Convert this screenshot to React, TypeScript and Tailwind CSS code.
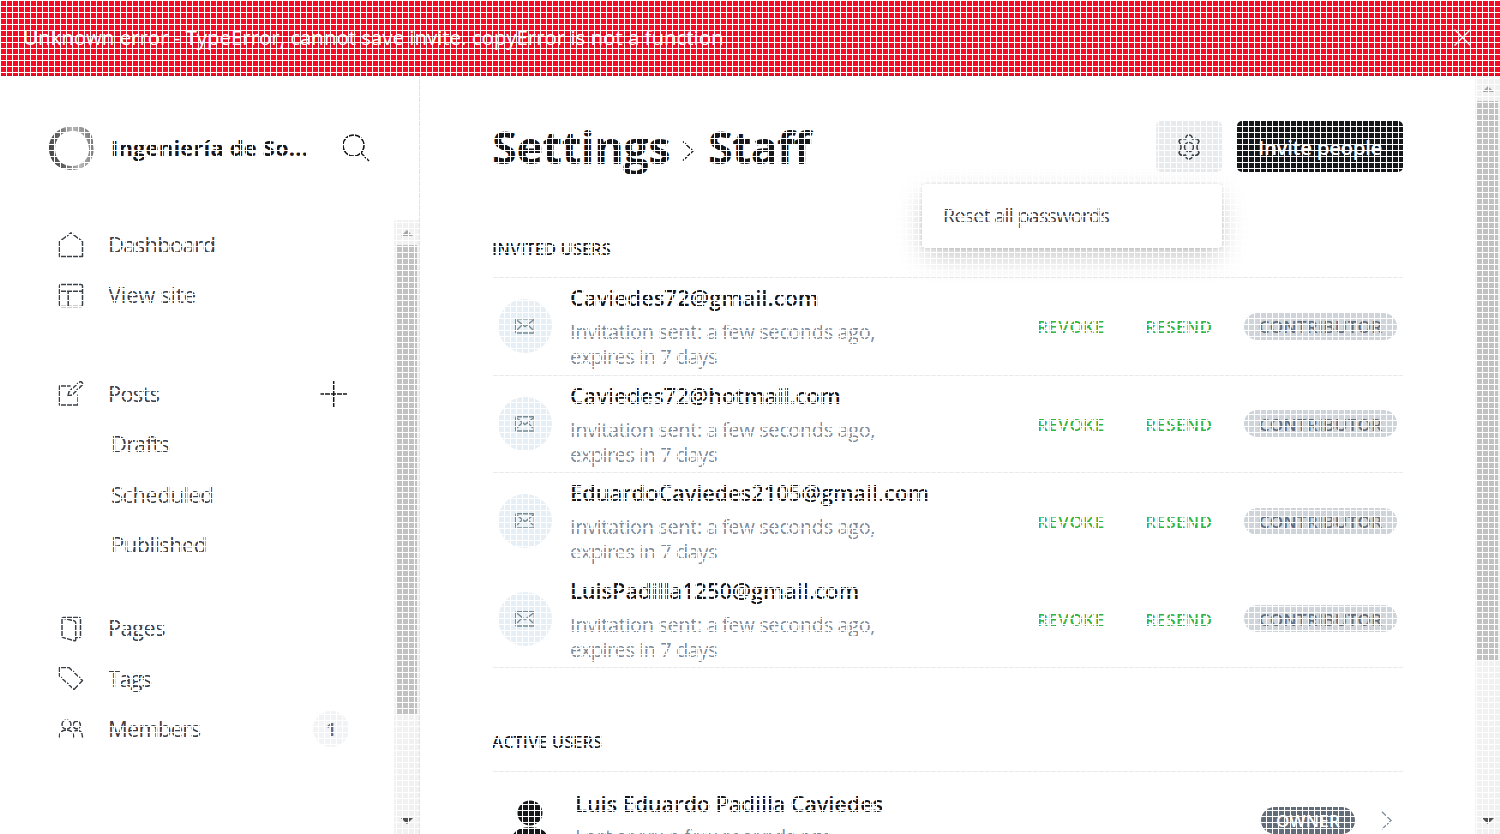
import React from "react";

const FONT = "font-['Open_Sans','Noto_Sans',sans-serif]";

function NavIcon({ name }: { name: string }) {
  return (
    <svg width="26" height="26" viewBox="0 0 26 26" fill="none" stroke="#394047" strokeWidth="1.5" strokeLinejoin="round" strokeLinecap="round" className="shrink-0">
      {name === "home" && <path d="M1.5 24.5V9.5L13 .8l11.5 8.7v15z" />}
      {name === "site" && <path d="M3 1.500h20q1.500 0 1.500 1.500v19q0 1.500-1.500 1.500H3q-1.500 0-1.500-1.500V3Q1.500 1.500 3 1.500zM1.500 8.300h23M10.200 8.300v15" />}
      {name === "posts" && <path d="M12 5H1.500v19h18.500V14M10 15l1-4.500L21.500 1q1.500-.7 2.500.4t.3 2.500L14 14z" />}
      {name === "pages" && <path d="M6 21.500H5.500Q4 21.500 4 20V3q0-1.500 1.500-1.500h15.500Q22.500 1.500 22.500 3v17q0 1.500-1.500 1.500H18M5 2.200l11 2.600q1.700.4 1.700 2V24q0 1-1.200.7L5.200 21.600" />}
      {name === "tags" && <path d="M1.500 1.500h9.500L24.500 14.500 16 23.500 1.500 10z" />}
      {name === "members" && (
        <path d="M4 8.500a4.500 4.500 0 1 0 9 0a4.500 4.500 0 1 0-9 0M15 9a3.700 3.700 0 1 0 7.400 0a3.700 3.700 0 1 0-7.400 0M1.500 21q0-7 7-7t7 7M17 14.800q7.500-1.500 7.500 6.200" />
      )}
    </svg>
  );
}

function NavItem({ icon, label, tracking, children }: { icon: string; label: string; tracking: string; children?: React.ReactNode }) {
  return (
    <div className="flex h-[50.400px] items-center pl-[58px] pr-[45px]">
      <NavIcon name={icon} />
      <span className={`mt-[-1.400px] ml-6 whitespace-nowrap text-[22px] font-normal ${tracking}`}>{label}</span>
      <span className="ml-auto flex">{children}</span>
    </div>
  );
}

function SubItem({ label, tracking }: { label: string; tracking: string }) {
  return <div className={`flex h-[50.400px] items-center pb-[2px] pl-[111px] text-[22px] ${tracking}`}>{label}</div>;
}

function Arrow({ down }: { down?: boolean }) {
  return (
    <svg width="12" height="6" viewBox="0 0 12 6" className="shrink-0">
      {down ? <path d="M0 0h12L6 6z" fill="#505050" /> : <path d="M0 6h12L6 0z" fill="#a3a3a3" />}
    </svg>
  );
}

function Chevron({ className }: { className: string }) {
  return (
    <svg viewBox="0 0 12 21" fill="none" stroke="currentColor" strokeWidth="1.4" className={className}>
      <path d="M1 1l10 9.500L1 20" />
    </svg>
  );
}

function Sidebar() {
  return (
    <aside className="flex w-[420px] shrink-0 flex-col border-r border-[#dfe3e7] text-[#394047]">
      <div className="flex h-36 shrink-0 items-center pl-[49px]">
        <svg width="46" height="46" viewBox="0 0 46 46" className="shrink-0">
          <defs>
            <linearGradient id="ring" x1="0" y1="0.600" x2="1" y2="0.400">
              <stop offset="0" stopColor="#444" />
              <stop offset=".3" stopColor="#666" />
              <stop offset=".6" stopColor="#bbb" />
              <stop offset="1" stopColor="#777" />
            </linearGradient>
          </defs>
          <path fillRule="evenodd" fill="url(#ring)" d="M25 1C38 1 45 8 44 20c3 14-7 25-21 25S0 36 0 23 11 1 25 1zM22 6C12 7 6 14 6 24s7 17 17 17 18-8 17-18S33 5 22 6z" />
        </svg>
        <span className="mt-[-1px] ml-4 w-[200px] whitespace-nowrap text-[22px] font-bold tracking-[0.150px] text-[#15171a]">Ingeniería de So...</span>
        <svg width="28" height="28" viewBox="0 0 28 28" fill="none" stroke="#15171a" strokeWidth="1.500" className="ml-[31px]">
          <circle cx="11.500" cy="11.500" r="10.500" />
          <path d="M19 19l8 8" />
        </svg>
      </div>
      <div className="flex min-h-0 flex-1">
        <nav className="w-[394px]">
          <NavItem icon="home" label="Dashboard" tracking="tracking-[-0.700px]" />
          <NavItem icon="site" label="View site" tracking="tracking-[-0.250px]" />
          <div className="h-[48.500px]" />
          <NavItem icon="posts" label="Posts" tracking="tracking-[-0.800px]">
            <svg width="28" height="28" viewBox="0 0 28 28" stroke="#15171a" strokeWidth="1.500" className="mt-[-1px] mr-[1px]">
              <path d="M13.700 1v26M.5 14h26.500" />
            </svg>
          </NavItem>
          <SubItem label="Drafts" tracking="tracking-[-0.800px]" />
          <SubItem label="Scheduled" tracking="tracking-[-0.500px]" />
          <SubItem label="Published" tracking="tracking-[-0.600px]" />
          <div className="h-[32.500px]" />
          <NavItem icon="pages" label="Pages" tracking="tracking-[-0.700px]" />
          <NavItem icon="tags" label="Tags" tracking="tracking-[-0.900px]" />
          <NavItem icon="members" label="Members" tracking="tracking-[-0.800px]">
            <span className="flex size-9 items-center justify-center rounded-full bg-[#f1f3f5] text-[18px] font-bold text-[#626d79]">1</span>
          </NavItem>
        </nav>
        <div className="flex w-[25px] flex-col items-center bg-[#f1f1f1]">
          <div className="flex h-[25px] items-center"><Arrow /></div>
          <div className="h-[469px] w-[21px] bg-[#c1c1c1]" />
          <div className="mt-auto mb-[10px]"><Arrow down /></div>
        </div>
      </div>
    </aside>
  );
}

function InviteRow({ email, tracking, last }: { email: string; tracking: string; last: boolean }) {
  return (
    <div className={`flex h-[97.500px] items-center border-t pr-[6px] pl-[6px] ${last ? "border-transparent" : "border-[#e8ebed]"}`}>
      <div className="flex size-[54px] shrink-0 items-center justify-center rounded-full bg-[#e5eff5]">
        <svg width="20" height="16" viewBox="0 0 20 16" fill="none" stroke="#738a94" strokeWidth="1.400">
          <rect x=".7" y=".7" width="18.600" height="14.300" rx="1" />
          <path d="M1 1.500l9 7 9-7M2 12l5-5M18 12l-5-5" />
        </svg>
      </div>
      <div className="ml-[18px] w-[400px] pb-[5px] whitespace-nowrap">
        <div className={`h-[37px] text-[22px] leading-[35px] font-semibold text-[#15171a] ${tracking}`}>{email}</div>
        <div className="h-[25px] text-[20px] leading-[29px] tracking-[-0.400px] text-[#7c8b9a]">Invitation sent: a few seconds ago,</div>
        <div className="h-[25px] text-[20px] leading-[29px] tracking-[-0.480px] text-[#7c8b9a]">expires in 7 days</div>
      </div>
      <span className="ml-[67px] w-[108px] pt-px text-[17px] font-semibold tracking-[0.500px] text-[#30b63e]">REVOKE</span>
      <span className="w-[99px] pt-px text-[17px] font-semibold tracking-[0.400px] text-[#30b63e]">RESEND</span>
      <span className="flex h-[27px] w-[153px] shrink-0 items-center justify-center rounded-full bg-[#ced4d9] pt-px text-[17px] font-semibold tracking-[0.250px] text-[#626d79]">CONTRIBUTOR</span>
    </div>
  );
}

const INVITES = [
  { email: "Caviedes72@gmail.com", tracking: "tracking-[0px]" },
  { email: "Caviedes72@hotmail.com", tracking: "tracking-[-0.100px]" },
  { email: "EduardoCaviedes2105@gmail.com", tracking: "tracking-[-0.150px]" },
  { email: "LuisPadilla1250@gmail.com", tracking: "tracking-[-0.180px]" },
];

function Content() {
  return (
    <main className="flex min-w-0 flex-1 flex-col overflow-hidden pr-[72px] pl-[72px]">
      <header className="relative flex h-36 shrink-0 items-center">
        <h1 className="flex items-center text-[45px] font-bold text-[#15171a]">
          <span className="mt-[-2px] w-[190px] tracking-[-0.400px]">Settings</span>
          <Chevron className="mt-[6px] h-[22px] w-[12px]" />
          <span className="mt-[-2px] ml-[14px] tracking-[-0.800px]">Staff</span>
        </h1>
        <button className="mt-[-3px] ml-auto flex h-[51px] w-[66px] items-center justify-center rounded-[5px] bg-[#e8ebed]">
          <svg width="24" height="26" viewBox="0 0 24 26" fill="none" stroke="#394047" strokeWidth="1.500" strokeLinejoin="round">
            <circle cx="12" cy="13" r="4.500" />
            <path d="M9.500 2Q12 0 14.500 2l1 3 3-.5q3 .5 3.500 3l-1.500 3q-1 2.500 0 5l1.500 3q-.5 2.500-3.500 3l-3-.5-1 3q-2.500 2-5 0l-1-3-3 .5q-3-.5-3.500-3l1.500-3q1-2.500 0-5L2 7.500q.5-2.500 3.500-3l3 .5z" />
          </svg>
        </button>
        <button className="mt-[-3px] ml-[15px] flex h-[51px] w-[166px] items-center justify-center rounded-[5px] bg-[#15171a] pt-px text-[20.500px] font-semibold tracking-[-0.350px] whitespace-nowrap text-white">Invite people</button>
        <div className="absolute top-[108px] right-[181px] z-10 flex h-[64px] w-[300px] items-center rounded-[4px] bg-white pl-[21px] text-[19.500px] tracking-[-0.650px] text-[#394047] shadow-[0_0_3px_rgba(0,0,0,0.12),0_10px_28px_-3px_rgba(0,0,0,0.26)]">Reset all passwords</div>
      </header>
      <h2 className="flex h-[57px] shrink-0 items-center pt-px text-[16.500px] font-semibold tracking-[0.050px] text-[#15171a]">INVITED USERS</h2>
      <section className="shrink-0 border-b border-[#e8ebed]">
        {INVITES.map((u, i) => (
          <InviteRow key={u.email} email={u.email} tracking={u.tracking} last={i === 3} />
        ))}
      </section>
      <h2 className="mt-[46px] flex h-[57px] shrink-0 items-center text-[16.500px] font-semibold tracking-[0.050px] text-[#15171a]">ACTIVE USERS</h2>
      <section className="flex h-[98px] shrink-0 items-center border-t border-[#e8ebed]">
        <svg width="54" height="54" viewBox="0 0 54 54" className="mt-[6px] ml-[11px] shrink-0" fill="#15171a">
          <circle cx="27" cy="16" r="12.500" />
          <path d="M7 50q0-20 20-20t20 20z" />
        </svg>
        <div className="ml-[18px] pb-[3px] whitespace-nowrap">
          <div className="text-[22px] leading-[36px] font-semibold tracking-[-0.230px] text-[#15171a]">Luis Eduardo Padilla Caviedes</div>
          <div className="text-[20px] leading-[32px] tracking-[-0.400px] text-[#7c8b9a]">Last seen: a few seconds ago</div>
        </div>
        <span className="ml-auto flex h-[27px] w-[94px] items-center justify-center rounded-full bg-[#626d79] pt-px text-[17px] font-semibold tracking-[0.200px] text-white">OWNER</span>
        <Chevron className="mr-[11px] ml-[26px] h-[21px] w-[11px] text-[#7c8b9a]" />
      </section>
    </main>
  );
}

export default function App() {
  return (
    <div className={`relative flex h-[834px] w-[1500px] flex-col overflow-hidden bg-white ${FONT}`}>
      <div className="flex h-[76px] shrink-0 items-center justify-between border-b border-[#c90d22] bg-[#f50b23] pr-[29px] pl-[23px] text-white">
        <p className="whitespace-nowrap text-[20.500px] tracking-[-0.040px]">Unknown error - TypeError, cannot save invite. copyError is not a function</p>
        <svg width="17" height="17" viewBox="0 0 17 17" stroke="currentColor" strokeWidth="1.300">
          <path d="M.5.5l16 16M16.500.5l-16 16" />
        </svg>
      </div>
      <div className="flex min-h-0 flex-1">
        <Sidebar />
        <Content />
        <div className="flex w-[25px] shrink-0 flex-col items-center bg-[#f1f1f1]">
          <div className="flex h-[25px] items-center"><Arrow /></div>
          <div className="h-[559px] w-[21px] bg-[#c1c1c1]" />
          <div className="mt-auto mb-[10px]"><Arrow down /></div>
        </div>
      </div>
      <div className="pointer-events-none absolute inset-0 z-20 bg-[linear-gradient(to_right,#fff_1px,transparent_1px),linear-gradient(to_bottom,#fff_1px,transparent_1px)] bg-[size:6px_6px]" />
    </div>
  );
}
